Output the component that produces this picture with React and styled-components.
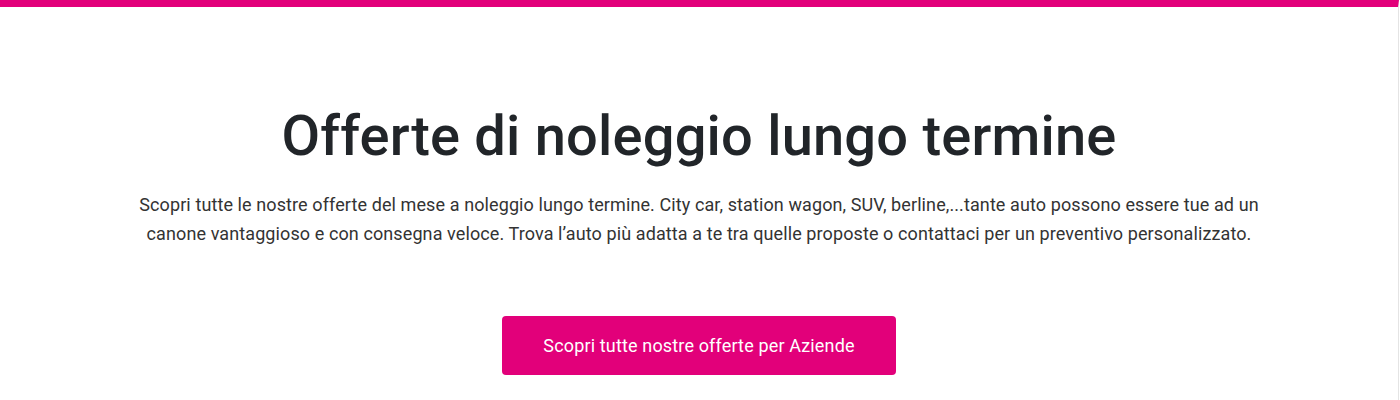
import React from 'react';
import styled, { createGlobalStyle } from 'styled-components';

const GlobalStyle = createGlobalStyle`
	html, body {
		margin: 0;
		padding: 0;
		background: #fff;
	}
	body {
		font-family: Roboto, "Liberation Sans", sans-serif;
	}
`;

const Page = styled.div`
	width: 1399px;
	height: 400px;
	border-right: 1px solid #e4e4e4;
	border-top: 7px solid #e2007a;
	box-sizing: border-box;
	overflow: hidden;
`;

const Section = styled.section`
	display: flex;
	flex-direction: column;
	align-items: center;
	padding-top: 93px;
`;

const Title = styled.h1`
	margin: 0;
	font-size: 56px;
	line-height: 72px;
	font-weight: 500;
	color: #212529;
	letter-spacing: 0.2px;
`;

const Intro = styled.p`
	margin: 18px 0 0;
	width: 1160px;
	text-align: center;
	font-size: 18px;
	line-height: 29px;
	color: #333;
	letter-spacing: 0.1px;
`;

const CtaButton = styled.a`
	display: flex;
	align-items: center;
	justify-content: center;
	margin-top: 68px;
	width: 394px;
	height: 59px;
	border-radius: 4px;
	background: #e2007a;
	color: #fff;
	font-size: 18px;
	letter-spacing: 0.15px;
	text-decoration: none;
	cursor: pointer;
`;

const App = () => {
	return (
		<Page>
			<GlobalStyle />
			<Section>
				<Title>Offerte di noleggio lungo termine</Title>
				<Intro>
					Scopri tutte le nostre offerte del mese a noleggio lungo termine. City car, station wagon, SUV, berline,...tante auto possono essere tue ad un
					<br />
					canone vantaggioso e con consegna veloce. Trova l’auto più adatta a te tra quelle proposte o contattaci per un preventivo personalizzato.
				</Intro>
				<CtaButton>Scopri tutte nostre offerte per Aziende</CtaButton>
			</Section>
		</Page>
	);
}

export default App;
